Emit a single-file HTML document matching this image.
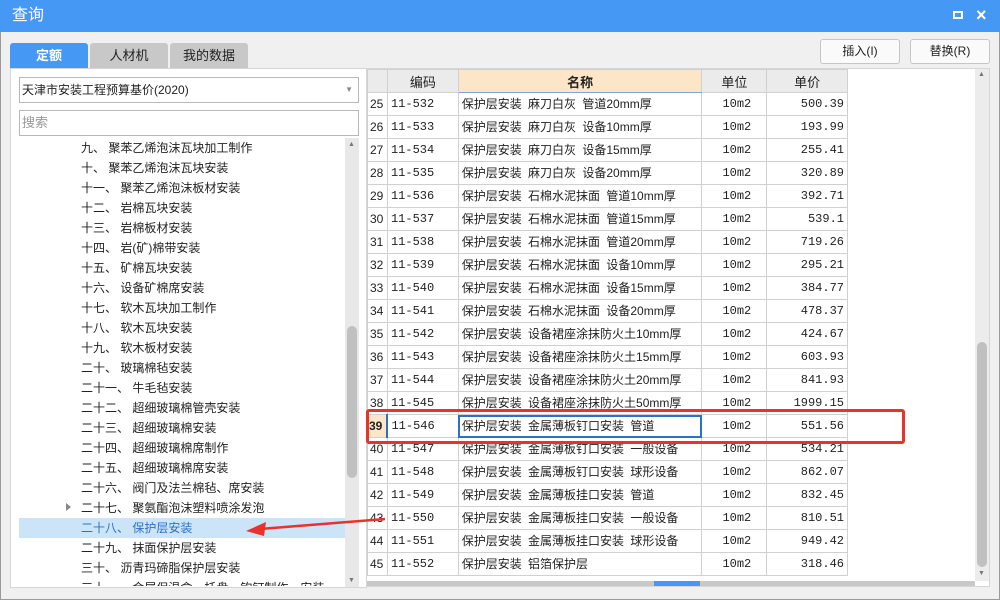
<!DOCTYPE html>
<html><head><meta charset="utf-8"><style>
*{margin:0;padding:0;box-sizing:border-box}
body{width:1000px;height:600px;background:#f0f0f0;font-family:"Liberation Sans","Noto Sans CJK SC",sans-serif;font-size:12px;color:#222;position:relative;overflow:hidden}
.a{position:absolute}
.title{left:0;top:0;width:1000px;height:32px;background:#4598f4;color:#fff;font-size:16px;line-height:32px;padding-left:12px}
.win{left:0;top:32px;width:1000px;height:568px;border:1px solid #9a9a9a;border-top:none}
.tab{top:43px;height:25px;line-height:25px;text-align:center;font-size:13px;border-radius:3px 3px 0 0}
.btn{top:39px;height:25px;border:1px solid #c6c6c6;border-radius:3px;background:#fafafa;text-align:center;line-height:23px;font-size:12px}
.tree div{position:absolute;left:0;width:325px;height:20px;line-height:20px;font-size:12px;color:#222;white-space:nowrap}
table{border-collapse:collapse;font-family:"Liberation Mono","Noto Sans CJK SC",monospace;font-size:12px}
td{border:1px solid #d0d0d0;height:23px;padding:0 3px;white-space:nowrap;line-height:21px}
td:nth-child(1){font-family:"Liberation Sans",sans-serif;font-size:12px;padding:0 2px}
td:nth-child(3){font-family:"Liberation Sans","Noto Sans CJK SC",sans-serif;font-size:12px;word-spacing:3px}
td:nth-child(4){padding-left:20px}
td:nth-child(5){text-align:right}
th{border:1px solid #d0d0d0;height:23px;font-weight:normal;background:#ebebeb;font-family:"Liberation Sans","Noto Sans CJK SC",sans-serif;font-size:13px}
</style></head><body>
<div class="a title">查询</div>
<div class="a" style="left:953px;top:11px;width:10px;height:8px;border:2px solid #fff"></div>
<div class="a" style="left:976px;top:3px;color:#fff;font-size:18px;font-weight:bold;line-height:24px">×</div>
<div class="a win"></div>
<div class="a tab" style="left:10px;width:78px;background:#4598f4;color:#fff;font-weight:bold">定额</div>
<div class="a tab" style="left:90px;width:78px;background:#c8c8c8">人材机</div>
<div class="a tab" style="left:170px;width:78px;background:#c8c8c8">我的数据</div>
<div class="a btn" style="left:820px;width:80px">插入(I)</div>
<div class="a btn" style="left:910px;width:80px">替换(R)</div>
<div class="a" style="left:10px;top:68px;width:357px;height:520px;background:#fff;border:1px solid #d6d6d6"></div>
<div class="a" style="left:19px;top:77px;width:340px;height:26px;border:1px solid #b8b8b8;background:#fff;line-height:24px;padding-left:2px;font-size:12px">天津市安装工程预算基价(2020)<span style="position:absolute;right:5px;top:0;color:#888;font-size:8px">▼</span></div>
<div class="a" style="left:19px;top:110px;width:340px;height:26px;border:1px solid #b8b8b8;background:#fff;line-height:24px;padding-left:2px;color:#999;font-size:13px">搜索</div>
<div class="a" style="left:19px;top:518px;width:326px;height:20px;background:#cce4f7"></div>
<div class="a tree" style="left:81px;top:138px;width:264px;height:448px;overflow:hidden">
<div style="top:0">九、 聚苯乙烯泡沫瓦块加工制作</div>
<div style="top:20px">十、 聚苯乙烯泡沫瓦块安装</div>
<div style="top:40px">十一、 聚苯乙烯泡沫板材安装</div>
<div style="top:60px">十二、 岩棉瓦块安装</div>
<div style="top:80px">十三、 岩棉板材安装</div>
<div style="top:100px">十四、 岩(矿)棉带安装</div>
<div style="top:120px">十五、 矿棉瓦块安装</div>
<div style="top:140px">十六、 设备矿棉席安装</div>
<div style="top:160px">十七、 软木瓦块加工制作</div>
<div style="top:180px">十八、 软木瓦块安装</div>
<div style="top:200px">十九、 软木板材安装</div>
<div style="top:220px">二十、 玻璃棉毡安装</div>
<div style="top:240px">二十一、 牛毛毡安装</div>
<div style="top:260px">二十二、 超细玻璃棉管壳安装</div>
<div style="top:280px">二十三、 超细玻璃棉安装</div>
<div style="top:300px">二十四、 超细玻璃棉席制作</div>
<div style="top:320px">二十五、 超细玻璃棉席安装</div>
<div style="top:340px">二十六、 阀门及法兰棉毡、席安装</div>
<div style="top:360px">二十七、 聚氨酯泡沫塑料喷涂发泡</div>
<div style="top:380px;color:#2a72c8">二十八、 保护层安装</div>
<div style="top:400px">二十九、 抹面保护层安装</div>
<div style="top:420px">三十、 沥青玛碲脂保护层安装</div>
<div style="top:440px">三十一、 金属保温盒、托盘、钩钉制作、安装</div>
</div>
<div class="a" style="left:66px;top:503px;width:0;height:0;border-left:5px solid #888;border-top:4px solid transparent;border-bottom:4px solid transparent"></div>
<div class="a" style="left:345px;top:138px;width:14px;height:449px;background:#e8e8e8"></div>
<div class="a" style="left:347px;top:326px;width:10px;height:152px;background:#c0c0c0;border-radius:5px"></div>
<div class="a" style="left:348px;top:141px;color:#777;font-size:7px">▲</div>
<div class="a" style="left:348px;top:577px;color:#777;font-size:7px">▼</div>

<div class="a" style="left:366px;top:68px;width:624px;height:519px;background:#fff;border:1px solid #d6d6d6"></div>
<table class="a" style="left:367px;top:69px;width:481px">
<colgroup><col style="width:20px"><col style="width:71px"><col style="width:244px"><col style="width:65px"><col style="width:81px"></colgroup>
<tr><th></th><th>编码</th><th style="background:#fde6c8;font-weight:bold;border-bottom:1px solid #7aa6d8">名称</th><th>单位</th><th>单价</th></tr>
<tr><td>25</td><td>11-532</td><td>保护层安装 麻刀白灰 管道20mm厚</td><td>10m2</td><td>500.39</td></tr>
<tr><td>26</td><td>11-533</td><td>保护层安装 麻刀白灰 设备10mm厚</td><td>10m2</td><td>193.99</td></tr>
<tr><td>27</td><td>11-534</td><td>保护层安装 麻刀白灰 设备15mm厚</td><td>10m2</td><td>255.41</td></tr>
<tr><td>28</td><td>11-535</td><td>保护层安装 麻刀白灰 设备20mm厚</td><td>10m2</td><td>320.89</td></tr>
<tr><td>29</td><td>11-536</td><td>保护层安装 石棉水泥抹面 管道10mm厚</td><td>10m2</td><td>392.71</td></tr>
<tr><td>30</td><td>11-537</td><td>保护层安装 石棉水泥抹面 管道15mm厚</td><td>10m2</td><td>539.1</td></tr>
<tr><td>31</td><td>11-538</td><td>保护层安装 石棉水泥抹面 管道20mm厚</td><td>10m2</td><td>719.26</td></tr>
<tr><td>32</td><td>11-539</td><td>保护层安装 石棉水泥抹面 设备10mm厚</td><td>10m2</td><td>295.21</td></tr>
<tr><td>33</td><td>11-540</td><td>保护层安装 石棉水泥抹面 设备15mm厚</td><td>10m2</td><td>384.77</td></tr>
<tr><td>34</td><td>11-541</td><td>保护层安装 石棉水泥抹面 设备20mm厚</td><td>10m2</td><td>478.37</td></tr>
<tr><td>35</td><td>11-542</td><td>保护层安装 设备裙座涂抹防火土10mm厚</td><td>10m2</td><td>424.67</td></tr>
<tr><td>36</td><td>11-543</td><td>保护层安装 设备裙座涂抹防火土15mm厚</td><td>10m2</td><td>603.93</td></tr>
<tr><td>37</td><td>11-544</td><td>保护层安装 设备裙座涂抹防火土20mm厚</td><td>10m2</td><td>841.93</td></tr>
<tr><td>38</td><td>11-545</td><td>保护层安装 设备裙座涂抹防火土50mm厚</td><td>10m2</td><td>1999.15</td></tr>
<tr><td style="padding:0 1px;background:#fde6c8;font-weight:bold;border-right:2px solid #2a72c8">39</td><td>11-546</td><td style="outline:2px solid #2a72c8;outline-offset:-2px">保护层安装 金属薄板钉口安装 管道</td><td>10m2</td><td>551.56</td></tr>
<tr><td>40</td><td>11-547</td><td>保护层安装 金属薄板钉口安装 一般设备</td><td>10m2</td><td>534.21</td></tr>
<tr><td>41</td><td>11-548</td><td>保护层安装 金属薄板钉口安装 球形设备</td><td>10m2</td><td>862.07</td></tr>
<tr><td>42</td><td>11-549</td><td>保护层安装 金属薄板挂口安装 管道</td><td>10m2</td><td>832.45</td></tr>
<tr><td>43</td><td>11-550</td><td>保护层安装 金属薄板挂口安装 一般设备</td><td>10m2</td><td>810.51</td></tr>
<tr><td>44</td><td>11-551</td><td>保护层安装 金属薄板挂口安装 球形设备</td><td>10m2</td><td>949.42</td></tr>
<tr><td>45</td><td>11-552</td><td>保护层安装 铝箔保护层</td><td>10m2</td><td>318.46</td></tr>
</table>
<div class="a" style="left:975px;top:69px;width:14px;height:512px;background:#ececec"></div>
<div class="a" style="left:977px;top:342px;width:10px;height:225px;background:#c0c0c0;border-radius:5px"></div>
<div class="a" style="left:978px;top:71px;color:#777;font-size:7px">▲</div>
<div class="a" style="left:978px;top:570px;color:#777;font-size:7px">▼</div>
<div class="a" style="left:367px;top:581px;width:608px;height:5px;background:#c8c8c8"></div>
<div class="a" style="left:654px;top:581px;width:46px;height:5px;background:#4598f4"></div>
<div class="a" style="left:366px;top:409px;width:539px;height:35px;border:3px solid #e8322c;border-radius:3px"></div>
<svg class="a" style="left:240px;top:510px" width="150" height="30"><line x1="145" y1="9" x2="20" y2="19" stroke="#e8322c" stroke-width="2.5"/><polygon points="6,21 26,12 24,26" fill="#e8322c"/></svg>
</body></html>
